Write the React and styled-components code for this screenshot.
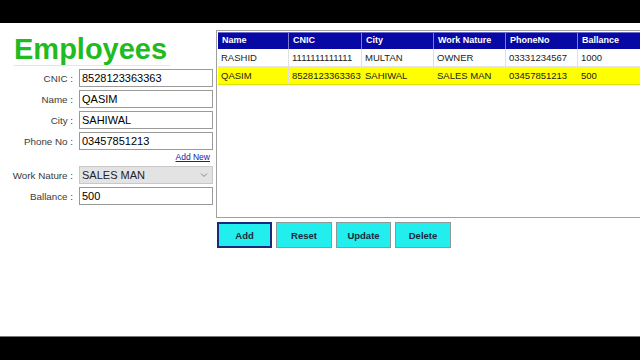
import React from "react";
import styled, { createGlobalStyle } from "styled-components";

const Global = createGlobalStyle`
  body {
    margin: 0;
    background: #000;
    font-family: "Liberation Sans", Arial, sans-serif;
  }
`;

const fields = [
  { label: "CNIC :", value: "8528123363363" },
  { label: "Name :", value: "QASIM" },
  { label: "City :", value: "SAHIWAL" },
  { label: "Phone No :", value: "03457851213" },
];

const columns = [
  { title: "Name", width: 71 },
  { title: "CNIC", width: 73 },
  { title: "City", width: 72 },
  { title: "Work Nature", width: 72 },
  { title: "PhoneNo", width: 72 },
  { title: "Ballance", width: 62 },
];

const rows = [
  { data: ["RASHID", "1111111111111", "MULTAN", "OWNER", "03331234567", "1000"], selected: false },
  { data: ["QASIM", "8528123363363", "SAHIWAL", "SALES MAN", "03457851213", "500"], selected: true },
];

const buttons = [
  { label: "Add", width: 55, active: true },
  { label: "Reset", width: 56 },
  { label: "Update", width: 55 },
  { label: "Delete", width: 56 },
];

const App = () => {
  return (
    <Screen>
      <Global />
      <Bar />
      <Content>
        <FormPanel>
          <Title>Employees</Title>
          {fields.map((f) => (
            <Row key={f.label}>
              <Label>{f.label}</Label>
              <Input>{f.value}</Input>
            </Row>
          ))}
          <LinkRow>
            <AddNew>Add New</AddNew>
          </LinkRow>
          <Row>
            <Label>Work Nature :</Label>
            <Select>
              <span>SALES MAN</span>
              <svg width="8" height="6" viewBox="0 0 8 6">
                <path d="M1 1.5 L4 4.5 L7 1.5" fill="none" stroke="#888" strokeWidth="1" />
              </svg>
            </Select>
          </Row>
          <Row>
            <Label>Ballance :</Label>
            <Input>500</Input>
          </Row>
        </FormPanel>
        <Right>
          <Grid>
            <HeaderRow>
              {columns.map((c) => (
                <HeadCell key={c.title} $w={c.width}>
                  {c.title}
                </HeadCell>
              ))}
            </HeaderRow>
            {rows.map((r, i) => (
              <DataRow key={i} $selected={r.selected}>
                {r.data.map((d, j) => (
                  <Cell key={j} $w={columns[j].width}>
                    {d}
                  </Cell>
                ))}
              </DataRow>
            ))}
          </Grid>
          <Buttons>
            {buttons.map((b) => (
              <Button key={b.label} $w={b.width} $active={b.active}>
                {b.label}
              </Button>
            ))}
          </Buttons>
        </Right>
      </Content>
      <Bar />
    </Screen>
  );
};

export default App;

const Screen = styled.div`
  width: 640px;
  height: 360px;
  display: flex;
  flex-direction: column;
  background: #000;
  overflow: hidden;
`;

const Bar = styled.div`
  height: 23px;
  flex: none;
`;

const Content = styled.div`
  flex: 1;
  background: #fff;
  display: flex;
  border-bottom: 1px solid #777;
`;

const FormPanel = styled.div`
  width: 216px;
  flex: none;
  display: flex;
  flex-direction: column;
  gap: 3px;
`;

const Title = styled.div`
  margin: 10px 0 0 14px;
  width: 156px;
  height: 32px;
  line-height: 32px;
  font-size: 29px;
  font-weight: bold;
  color: #1fbb1f;
  border-bottom: 1px solid #d6f0d6;
`;

const Row = styled.div`
  display: flex;
  align-items: center;
  height: 18px;
`;

const Label = styled.div`
  width: 73px;
  text-align: right;
  font-size: 9.8px;
  color: #3a3a3a;
  margin-right: 6px;
`;

const Input = styled.div`
  width: 134px;
  height: 18px;
  box-sizing: border-box;
  border: 1px solid #9a9a9a;
  background: #fff;
  font-size: 11px;
  color: #000;
  padding: 0 2px;
  line-height: 16px;
`;

const Select = styled(Input)`
  background: #e3e3e3;
  border-color: #c8c8c8;
  display: flex;
  align-items: center;
  justify-content: space-between;
  padding-right: 4px;
  color: #222;
`;

const LinkRow = styled.div`
  display: flex;
  justify-content: flex-end;
  padding-right: 6px;
  height: 11px;
  margin-top: -1px;
`;

const AddNew = styled.a`
  font-size: 8.5px;
  color: #1a1aa6;
  text-decoration: underline;
  line-height: 11px;
`;

const Right = styled.div`
  flex: 1;
  display: flex;
  flex-direction: column;
  padding-top: 7px;
`;

const Grid = styled.div`
  height: 188px;
  box-sizing: border-box;
  border: 1px solid #a0a0a0;
  border-right: none;
  padding: 1px 0 0 1px;
  background: #fff;
`;

const HeaderRow = styled.div`
  display: flex;
  height: 16px;
  background: #0808a4;
  border-top: 1px solid #6a6ad0;
`;

const HeadCell = styled.div`
  width: ${(p) => p.$w}px;
  flex: none;
  box-sizing: border-box;
  border-right: 1px solid #7b7bd0;
  color: #fff;
  font-weight: bold;
  font-size: 9px;
  padding-left: 4px;
  line-height: 15px;
  &:last-child {
    border-right: none;
  }
`;

const DataRow = styled.div`
  display: flex;
  height: 18px;
  background: ${(p) => (p.$selected ? "#ffff00" : "#fff")};
  border-bottom: 1px solid ${(p) => (p.$selected ? "#dede00" : "#e4e4e4")};
  box-sizing: border-box;
`;

const Cell = styled.div`
  width: ${(p) => p.$w}px;
  flex: none;
  box-sizing: border-box;
  border-right: 1px solid #e0e0e0;
  font-size: 9.5px;
  color: #222;
  padding-left: 3px;
  line-height: 17px;
  &:last-child {
    border-right: none;
  }
`;

const Buttons = styled.div`
  display: flex;
  gap: 4px;
  margin-top: 4px;
  padding-left: 1px;
`;

const Button = styled.div`
  width: ${(p) => p.$w}px;
  height: 26px;
  box-sizing: border-box;
  background: #22eeee;
  border: ${(p) => (p.$active ? "2px solid #1a2a7a" : "1px solid #8a9a9a")};
  display: flex;
  align-items: center;
  justify-content: center;
  font-size: 9.5px;
  font-weight: bold;
  color: #1a2a3a;
`;
